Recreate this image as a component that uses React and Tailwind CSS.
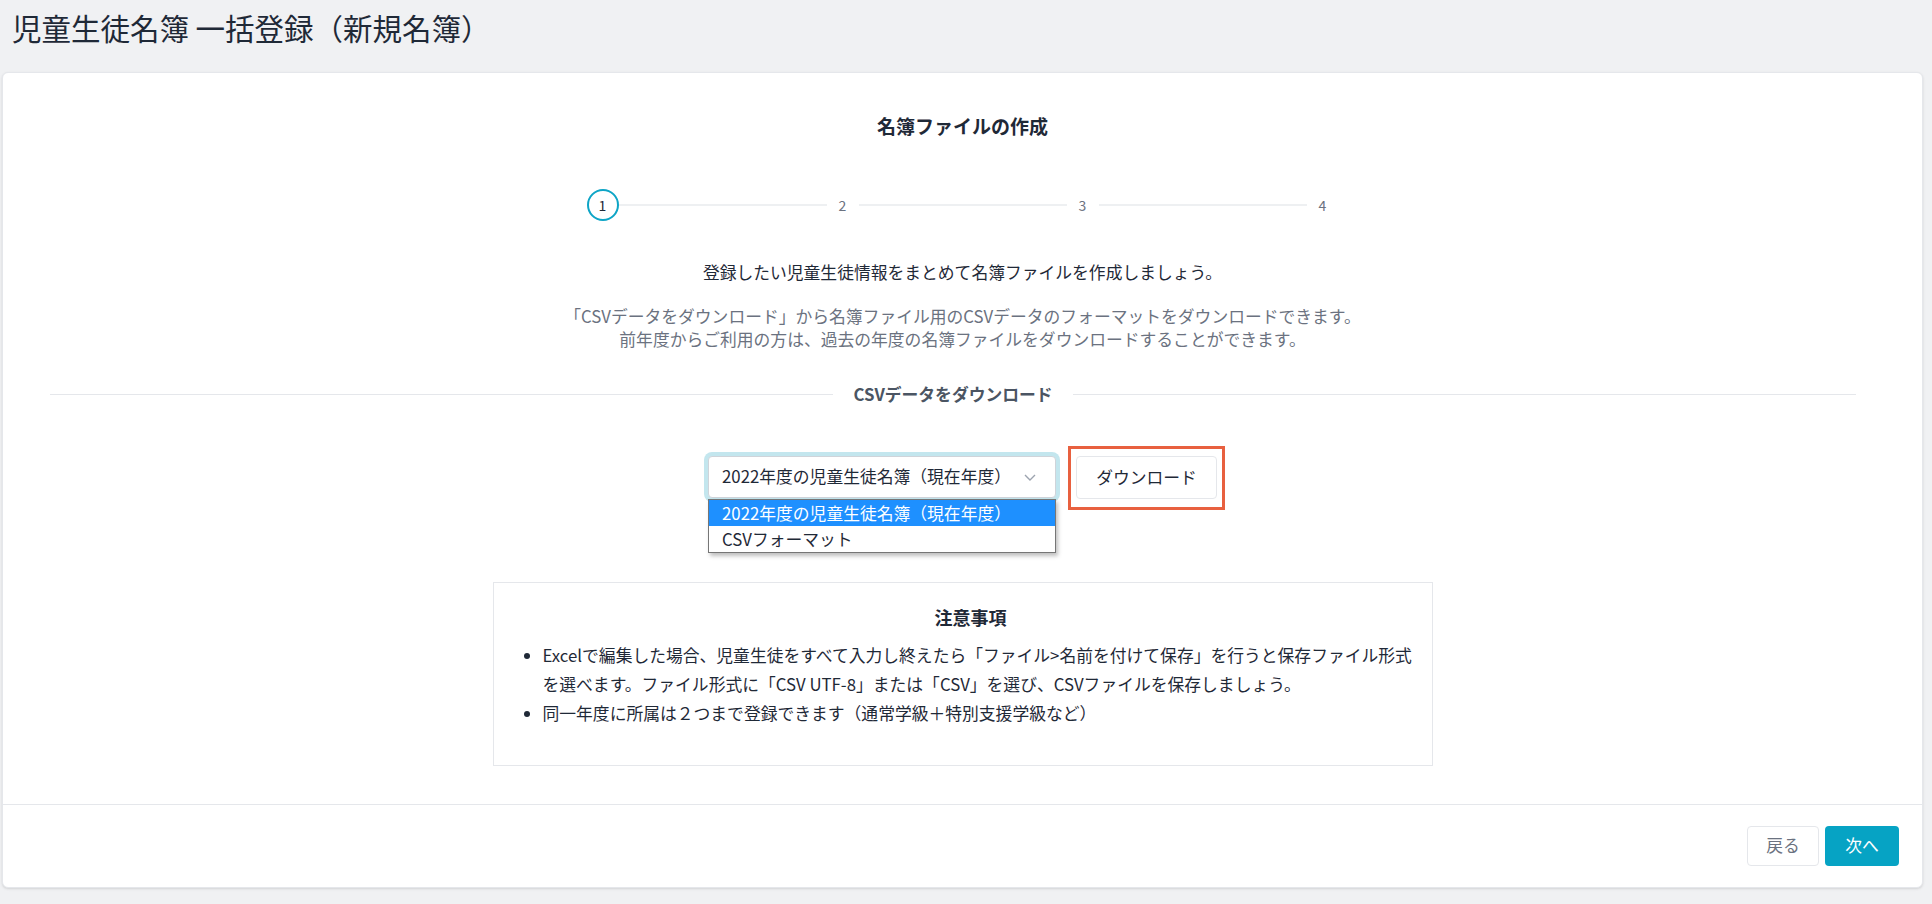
import React from "react";

const font = { fontFamily: '"Noto Sans CJK JP", "Noto Sans", sans-serif' };

function Stepper() {
  const Line = () => <div className="h-[2px] w-[208px] bg-[#eef0f2]" />;
  const Num = ({ n }) => (
    <div className="w-[32px] h-[32px] flex items-center justify-center text-[14px] text-[#6b7280]">{n}</div>
  );
  return (
    <div className="flex items-center justify-center mt-[49px]">
      <div className="w-[32px] h-[32px] rounded-full border-2 border-[#0ea5c6] flex items-center justify-center text-[14px] text-[#1f2937]">1</div>
      <Line />
      <Num n="2" />
      <Line />
      <Num n="3" />
      <Line />
      <Num n="4" />
    </div>
  );
}

export default function App() {
  return (
    <div className="w-[1932px] h-[904px] bg-[#f0f1f3] text-[#1f2937] overflow-hidden" style={font}>
      <div className="h-[72px] pt-[8px] pl-[12px]">
        <h1 className="text-[29.5px] leading-[38px] font-normal text-[#1f2937]">児童生徒名簿 一括登録（新規名簿）</h1>
      </div>
      <div className="ml-[2px] mr-[9px] h-[816px] bg-white rounded-[6px] border border-[#e5e7eb] shadow-sm flex flex-col">
        <div className="flex-1 flex flex-col items-center pt-[39px]">
          <h2 className="text-[19px] leading-[28px] font-bold text-[#1f2937]">名簿ファイルの作成</h2>
          <Stepper />
          <p className="mt-[39px] text-[16.8px] leading-[24px] text-[#1f2937]">登録したい児童生徒情報をまとめて名簿ファイルを作成しましょう。</p>
          <div className="mt-[21px] text-[16.8px] leading-[23px] text-[#6b7280] text-center">
            <p>「CSVデータをダウンロード」から名簿ファイル用のCSVデータのフォーマットをダウンロードできます。</p>
            <p>前年度からご利用の方は、過去の年度の名簿ファイルをダウンロードすることができます。</p>
          </div>
          <div className="mt-[31px] self-stretch flex items-center pl-[47px] pr-[66px]">
            <div className="flex-1 h-px bg-[#e5e7eb]" />
            <span className="px-[20px] text-[16.8px] leading-[24px] font-bold text-[#4b5563]">CSVデータをダウンロード</span>
            <div className="flex-1 h-px bg-[#e5e7eb]" />
          </div>
          <div className="mt-[50px] flex items-start gap-[20px]">
            <div className="relative">
              <div className="w-[348px] h-[42px] rounded-[4px] border border-[#cfd4da] bg-white flex items-center justify-between pl-[13px] pr-[18px] ring-4 ring-[#c3e6ee] text-[16.8px] text-[#1f2937]">
                <span>2022年度の児童生徒名簿（現在年度）</span>
                <svg width="14" height="14" viewBox="0 0 14 14" fill="none" stroke="#9ca3af" strokeWidth="1.4">
                  <path d="M2 5l5 5 5-5" />
                </svg>
              </div>
              <div className="absolute left-0 top-[43px] w-[348px] bg-white border border-[#767676] shadow-[2px_3px_4px_rgba(0,0,0,0.25)] z-10 text-[16.8px] leading-[26px]">
                <div className="bg-[#1e90ff] text-white pl-[13px]">2022年度の児童生徒名簿（現在年度）</div>
                <div className="text-[#1f2937] pl-[13px]">CSVフォーマット</div>
              </div>
            </div>
            <div className="relative">
              <button className="w-[141px] h-[43px] rounded-[4px] border border-[#e5e7eb] bg-white text-[16.8px] text-[#1f2937]">ダウンロード</button>
              <div className="absolute left-[-8px] right-[-8px] top-[-10px] bottom-[-11px] border-[3px] border-[#e8603f] pointer-events-none" />
            </div>
          </div>
          <div className="mt-[83px] w-[940px] h-[184px] border border-[#e5e7eb] pt-[20px] pl-[24px] pr-[8px]">
            <h3 className="text-center text-[18px] leading-[28px] font-bold text-[#1f2937]">注意事項</h3>
            <ul className="mt-[10px] list-disc pl-[25px] text-[16.8px] leading-[29px] text-[#1f2937]">
              <li>Excelで編集した場合、児童生徒をすべて入力し終えたら「ファイル&gt;名前を付けて保存」を行うと保存ファイル形式を選べます。ファイル形式に「CSV UTF-8」または「CSV」を選び、CSVファイルを保存しましょう。</li>
              <li>同一年度に所属は２つまで登録できます（通常学級＋特別支援学級など）</li>
            </ul>
          </div>
        </div>
        <div className="border-t border-[#e5e7eb] h-[83px] flex items-center justify-end gap-[6px] pr-[23px]">
          <button className="w-[72px] h-[40px] rounded-[4px] border border-[#e5e7eb] bg-white text-[16.8px] text-[#6b7280]">戻る</button>
          <button className="w-[74px] h-[40px] rounded-[4px] bg-[#06a3c4] text-[16.8px] text-white">次へ</button>
        </div>
      </div>
    </div>
  );
}
